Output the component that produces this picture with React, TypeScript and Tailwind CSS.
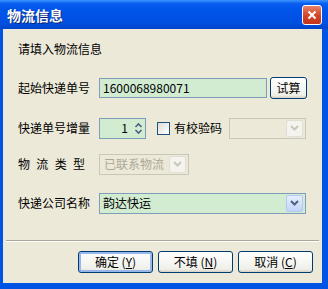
import React from "react";

const font = { fontFamily: '"Noto Sans CJK SC", "Noto Sans", sans-serif' };

const Chevron = ({ disabled }: { disabled?: boolean }) => (
	<svg width="9" height="6" viewBox="0 0 9 6">
		<path
			d="M1 1 L4.5 4.5 L8 1"
			fill="none"
			stroke={disabled ? "#c9c7ba" : "#4d6185"}
			strokeWidth="2"
		/>
	</svg>
);

const DropButton = ({ disabled }: { disabled?: boolean }) => (
	<div
		className={
			disabled
				? "w-[17px] h-[17px] shrink-0 flex items-center justify-center rounded-[2px] border border-[#e1dfd4] bg-[#f4f3ee]"
				: "w-[17px] h-[17px] shrink-0 flex items-center justify-center rounded-[2px] border border-[#b5c8f2] bg-[linear-gradient(180deg,#e6eefc,#c1d3fb)]"
		}
	>
		<Chevron disabled={disabled} />
	</div>
);

const Label = ({ children }: { children: string }) => (
	<div className="w-[81px] shrink-0 text-[12px] text-black leading-none">{children}</div>
);

const XpButton = ({ label, hotkey, isDefault }: { label: string; hotkey: string; isDefault?: boolean }) => (
	<button
		type="button"
		className={
			isDefault
				? "w-[75px] h-[22px] rounded-[3px] border border-[#003c74] bg-[linear-gradient(180deg,#ffffff,#f0f0ea_85%,#d6d0c5)] text-[12px] text-black shadow-[inset_0_0_0_2px_#98b8ec]"
				: "w-[75px] h-[22px] rounded-[3px] border border-[#003c74] bg-[linear-gradient(180deg,#ffffff,#f0f0ea_85%,#d6d0c5)] text-[12px] text-black"
		}
	>
		{label} (<span className="underline">{hotkey}</span>)
	</button>
);

export default function App() {
	return (
		<div className="w-[328px] h-[289px] flex flex-col bg-[#0054e3] overflow-hidden" style={font}>
			{/* title bar */}
			<div className="h-[29px] shrink-0 flex items-center justify-between pl-[7px] pr-[6px] bg-[linear-gradient(180deg,#3d95ff_0%,#0a5ff0_12%,#0055ea_30%,#0050e0_80%,#0044c8_100%)]">
				<span className="text-[14px] font-bold text-white [text-shadow:1px_1px_0_#0a1f6e] leading-none">
					物流信息
				</span>
				<div className="w-[20px] h-[20px] rounded-[3px] border border-white bg-[linear-gradient(180deg,#e8836a,#d4472a_50%,#c1351c)] flex items-center justify-center">
					<svg width="10" height="10" viewBox="0 0 10 10">
						<path d="M1.5 1.5 L8.5 8.5 M8.5 1.5 L1.5 8.5" stroke="white" strokeWidth="2" />
					</svg>
				</div>
			</div>

			{/* body */}
			<div className="flex-1 ml-[3px] mr-[6px] mb-[6px] bg-[#ece9d8] flex flex-col">
				<div className="flex flex-col pl-[15px] pt-[12px]">
					<div className="h-[16px] flex items-center text-[12px] text-black">请填入物流信息</div>

					{/* row 1 */}
					<div className="mt-[20px] h-[22px] flex items-center">
						<Label>起始快递单号</Label>
						<div className="w-[168px] h-[20px] border border-[#7f9db9] bg-[#d2ecd2] flex items-center px-[3px] text-[12px] text-black">
							1600068980071
						</div>
						<button
							type="button"
							className="ml-[3px] w-[37px] h-[22px] rounded-[3px] border border-[#003c74] bg-[linear-gradient(180deg,#ffffff,#f0f0ea_85%,#d6d0c5)] text-[12px] text-black"
						>
							试算
						</button>
					</div>

					{/* row 2 */}
					<div className="mt-[18px] h-[22px] flex items-center">
						<Label>快递单号增量</Label>
						<div className="w-[47px] h-[21px] border border-[#7f9db9] bg-[#d2ecd2] flex items-center justify-end pr-[2px] text-[12px] text-black">
							<span className="mr-[6px]">1</span>
							<svg width="9" height="13" viewBox="0 0 9 13">
								<path d="M1.5 5 L4.5 2 L7.5 5 M1.5 8 L4.5 11 L7.5 8" fill="none" stroke="#4d6185" strokeWidth="1.6" />
							</svg>
						</div>
						<div className="ml-[11px] w-[13px] h-[13px] border border-[#1c5180] bg-[linear-gradient(135deg,#dcdcd7,#ffffff)]" />
						<span className="ml-[4px] text-[12px] text-black">有校验码</span>
						<div className="ml-[7px] w-[77px] h-[21px] border border-[#c9c7ba] bg-[#ece9d8] flex items-center justify-end pr-[2px]">
							<DropButton disabled />
						</div>
					</div>

					{/* row 3 */}
					<div className="mt-[14px] h-[22px] flex items-center">
						<div className="w-[67px] mr-[14px] shrink-0 flex justify-between text-[12px] text-black leading-none">
							<span>物</span>
							<span>流</span>
							<span>类</span>
							<span>型</span>
						</div>
						<div className="w-[90px] h-[21px] border border-[#c9c7ba] bg-[#ece9d8] flex items-center pl-[4px] pr-[2px]">
							<span className="flex-1 whitespace-nowrap text-[12px] text-[#aca899]">已联系物流</span>
							<DropButton disabled />
						</div>
					</div>

					{/* row 4 */}
					<div className="mt-[17px] h-[22px] flex items-center">
						<Label>快递公司名称</Label>
						<div className="w-[207px] h-[21px] border border-[#7f9db9] bg-[#d2ecd2] flex items-center pl-[3px] pr-[2px]">
							<span className="flex-1 text-[12px] text-black">韵达快运</span>
							<DropButton />
						</div>
					</div>
				</div>

				<div className="flex-1" />

				{/* footer */}
				<div className="mx-[3px] border-t border-[#aca899] border-b border-b-white" />
				<div className="h-[41px] flex items-center justify-end gap-[5px] pr-[9px] pb-[2px]">
					<XpButton label="确定" hotkey="Y" isDefault />
					<XpButton label="不填" hotkey="N" />
					<XpButton label="取消" hotkey="C" />
				</div>
			</div>
		</div>
	);
}
